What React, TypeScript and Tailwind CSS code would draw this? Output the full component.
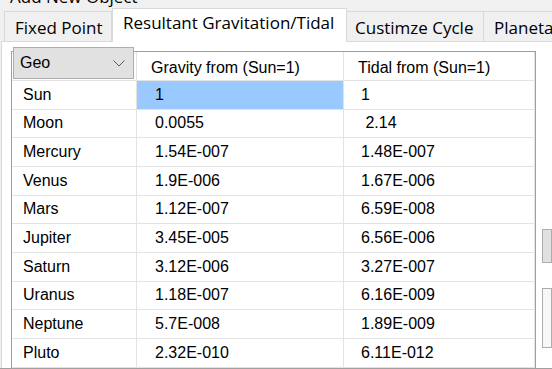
const rows: [string, string, string][] = [
  ["Sun", "1", "1"],
  ["Moon", "0.0055", " 2.14"],
  ["Mercury", "1.54E-007", "1.48E-007"],
  ["Venus", "1.9E-006", "1.67E-006"],
  ["Mars", "1.12E-007", "6.59E-008"],
  ["Jupiter", "3.45E-005", "6.56E-006"],
  ["Saturn", "3.12E-006", "3.27E-007"],
  ["Uranus", "1.18E-007", "6.16E-009"],
  ["Neptune", "5.7E-008", "1.89E-009"],
  ["Pluto", "2.32E-010", "6.11E-012"],
];

function Tabs() {
  return (
    <div className="h-[31px] flex items-end pl-[4px] font-['Open_Sans',sans-serif] text-[17px] leading-[20px] whitespace-nowrap">
      <div className="w-[108px] h-[30px] shrink-0 pl-[10px] pt-[6px] bg-[#f0f0f0] border border-b-0 border-[#d9d9d9]">
        Fixed Point
      </div>
      <div className="w-[235px] h-[34px] shrink-0 pl-[10px] pt-[4px] bg-white border border-b-0 border-[#d9d9d9] -mb-px relative z-10">
        Resultant Gravitation/Tidal
      </div>
      <div className="w-[137px] h-[30px] shrink-0 pl-[8px] pt-[6px] bg-[#f0f0f0] border border-b-0 border-l-0 border-[#d9d9d9]">
        Custimze Cycle
      </div>
      <div className="w-[120px] h-[30px] shrink-0 pl-[10px] pt-[6px] bg-[#f0f0f0] border border-b-0 border-l-0 border-[#d9d9d9]">
        Planetary
      </div>
    </div>
  );
}

function Grid() {
  return (
    <div className="w-[531px] self-stretch mt-[9px] ml-[9px] flex flex-col border-l border-t border-r border-[#a0a0a0] bg-white text-[16px]">
      {/* header */}
      <div className="h-[29px] flex shrink-0">
        <div className="w-[125px] shrink-0 border-r border-b border-[#e3e3e3]">
          <div className="relative z-10 -mt-[5px] ml-[1px] w-[121px] h-[32px] flex items-center justify-between pl-[6px] pr-[8px] bg-[#e1e1e1] border border-[#adadad]">
            <span>Geo</span>
            <svg width="12" height="7" viewBox="0 0 12 7">
              <path d="M0.5 0.5 L6 6 L11.5 0.5" fill="none" stroke="#5a5a5a" strokeWidth="1" />
            </svg>
          </div>
        </div>
        <div className="w-[207px] shrink-0 flex items-center pl-[14px] pt-[4px] border-r border-b border-[#e3e3e3]">
          Gravity from (Sun=1)
        </div>
        <div className="w-[191px] shrink-0 flex items-center pl-[14px] pt-[4px] border-r border-b border-[#e3e3e3]">
          Tidal from (Sun=1)
        </div>
        <div className="flex-1" />
      </div>
      {/* body */}
      <div className="flex-1 overflow-hidden">
        {rows.map(([name, g, t], i) => (
          <div key={name} className="h-[28.67px] flex">
            <div className="w-[125px] shrink-0 flex items-center pl-[11px] border-r border-b border-[#e3e3e3]">
              {name}
            </div>
            <div
              className={
                "w-[207px] shrink-0 flex items-center pl-[18px] border-r border-b border-[#e3e3e3] " +
                (i === 0 ? "bg-[#99c9ff]" : "")
              }
            >
              {g}
            </div>
            <div className="w-[191px] shrink-0 flex items-center pl-[17px] border-r border-b border-[#e3e3e3] whitespace-pre">
              {t}
            </div>
            <div className="flex-1" />
          </div>
        ))}
      </div>
    </div>
  );
}

export default function App() {
  return (
    <div className="w-[552px] h-[369px] overflow-hidden bg-[#f0f0f0] flex flex-col text-[#000] font-['Liberation_Sans',Arial,sans-serif]">
      <div className="h-[10px] shrink-0 overflow-hidden">
        <div className="-mt-[13px] pl-[10px] font-['Open_Sans',sans-serif] text-[17px] leading-[20px] whitespace-nowrap">
          Add New Object
        </div>
      </div>
      <Tabs />
      <div className="flex-1 ml-[1px] flex bg-white border-t border-l border-[#d9d9d9]">
        <Grid />
        <div className="ml-[6px] flex flex-col">
          <div className="mt-[187px] w-[10px] h-[34px] bg-[#e1e1e1] border border-[#adadad]" />
          <div className="mt-[25px] w-[10px] h-[60px] bg-[#f7f7f7] border border-[#adadad]" />
        </div>
      </div>
      <div className="h-[9px] shrink-0 border-t border-[#a0a0a0] bg-[#f0f0f0]" />
    </div>
  );
}
